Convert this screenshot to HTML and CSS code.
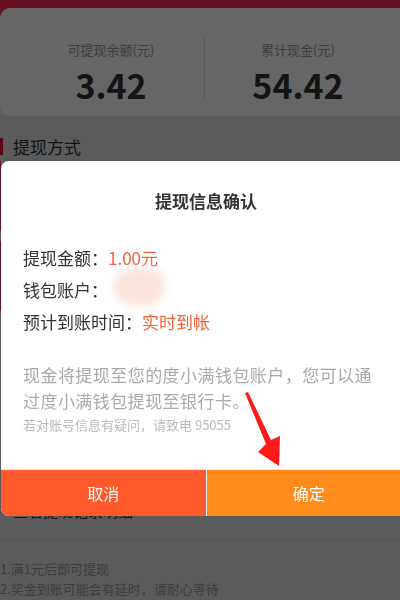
FILE: index.html
```html
<!DOCTYPE html>
<html lang="zh-CN">
<head>
  <meta charset="UTF-8">
  <meta name="viewport" content="width=device-width, initial-scale=1.0">
  <title>提现</title>
  <link rel="stylesheet" href="styles.css">
</head>
<body>
  <div class="page">
    <div class="banner">
      <div class="summary">
        <div class="stat">
          <div class="stat-label">可提现余额(元)</div>
          <div class="stat-value">3.42</div>
        </div>
        <div class="stat-divider"></div>
        <div class="stat">
          <div class="stat-label">累计现金(元)</div>
          <div class="stat-value">54.42</div>
        </div>
      </div>
    </div>

    <div class="section-title">提现方式</div>
    <div class="methods">
      <div class="method selected"></div>
      <div class="method"></div>
    </div>
    <div class="record">查看提现记录明细</div>

    <div class="notes">
      <div>1.满1元后即可提现</div>
      <div>2.奖金到账可能会有延时，请耐心等待</div>
    </div>
  </div>

  <div class="mask"></div>

  <div class="dialog">
    <div class="dialog-title">提现信息确认</div>
    <div class="dialog-rows">
      <div class="row"><span class="row-label">提现金额：</span><span class="row-value">1.00元</span></div>
      <div class="row"><span class="row-label">钱包账户：</span><span class="account-blur"></span></div>
      <div class="row"><span class="row-label">预计到账时间：</span><span class="row-value">实时到帐</span></div>
    </div>
    <p class="dialog-desc">现金将提现至您的度小满钱包账户，您可以通过度小满钱包提现至银行卡。</p>
    <div class="dialog-hint">若对账号信息有疑问，请致电 95055</div>
    <div class="dialog-actions">
      <button class="btn btn-cancel">取消</button>
      <button class="btn btn-ok">确定</button>
    </div>
  </div>

  <svg class="arrow" width="50" height="82" viewBox="0 0 50 82">
    <polygon points="5,5 8,4 31,52 40,48 39,78 18,64 26,56" fill="#ff1a1a"/>
  </svg>
</body>
</html>
```

FILE: styles.css
```css
body {
  margin: 0;
  width: 400px;
  height: 600px;
  overflow: hidden;
  font-family: "Noto Sans CJK SC", "Noto Sans", sans-serif;
  background-color: #e4e4e4;
}

.page {
  width: 410px;
}

.banner {
  padding-top: 8px;
  background: linear-gradient(#ff2855 0 40px, transparent 40px);
}

.summary {
  display: grid;
  grid-template-columns: 186px 1px 186px;
  height: 108px;
  box-sizing: border-box;
  padding: 33px 20px 0 18px;
  background-color: #fff;
  border-radius: 10px;
}

.stat {
  text-align: center;
}

.stat-label {
  font-size: 13px;
  line-height: 18px;
  color: #999;
}

.stat-value {
  margin-top: 6px;
  font-size: 34px;
  line-height: 40px;
  font-weight: 700;
  color: #333;
}

.stat-divider {
  height: 65px;
  margin-top: -6px;
  background-color: #ddd;
}

.section-title {
  margin-top: 22px;
  padding-left: 10px;
  border-left: 3px solid #e60033;
  font-size: 17px;
  line-height: 17px;
  color: #333;
}

.methods {
  margin-top: 6px;
  height: 330px;
  display: flex;
  flex-direction: column;
  gap: 10px;
}

.method {
  height: 70px;
  background-color: #fff;
  border-left: 1px solid #ff2855;
}

.record {
  margin-top: 10px;
  padding-left: 13px;
  font-size: 15px;
  line-height: 20px;
  color: #333;
}

.notes {
  margin-top: 19px;
  padding-top: 18px;
  border-top: 1px solid #d0d0d0;
  font-size: 13px;
  line-height: 20px;
  color: #999;
}

.mask {
  position: fixed;
  inset: 0;
  background-color: rgba(0, 0, 0, 0.6);
}

.dialog {
  position: absolute;
  left: 1px;
  top: 161px;
  width: 410px;
  height: 355px;
  display: flex;
  flex-direction: column;
  background-color: #fff;
  border-radius: 8px;
  overflow: hidden;
}

.dialog-title {
  margin-top: 28px;
  text-align: center;
  font-size: 17px;
  line-height: 24px;
  font-weight: 700;
  color: #333;
}

.dialog-rows {
  margin-top: 29px;
  padding: 0 22px;
}

.row {
  position: relative;
  font-size: 17px;
  line-height: 32px;
  color: #333;
}

.row-value {
  color: #f2643a;
}

.account-blur {
  position: absolute;
  left: 90px;
  top: -6px;
  width: 52px;
  height: 38px;
  border-radius: 50% 40% 45% 50%;
  background-color: #fbe4dc;
  filter: blur(4px);
}

.dialog-desc {
  margin: 24px 0 0;
  padding: 0 22px;
  font-size: 17px;
  line-height: 26px;
  letter-spacing: 0.45px;
  color: #aaa;
}

.dialog-hint {
  padding: 0 22px;
  margin-top: 1px;
  font-size: 13px;
  line-height: 20px;
  color: #bbb;
}

.dialog-actions {
  margin-top: auto;
  display: flex;
  height: 46px;
  border-top: 1px solid #fde3d6;
}

.btn {
  flex: 1;
  border: none;
  font-family: inherit;
  font-size: 16px;
  color: #fff;
  cursor: pointer;
}

.btn-cancel {
  background-color: #ff5a2b;
}

.btn-ok {
  background-color: #ff8c1a;
  border-left: 1px solid #fff;
}

.arrow {
  position: absolute;
  left: 240px;
  top: 388px;
}
```
